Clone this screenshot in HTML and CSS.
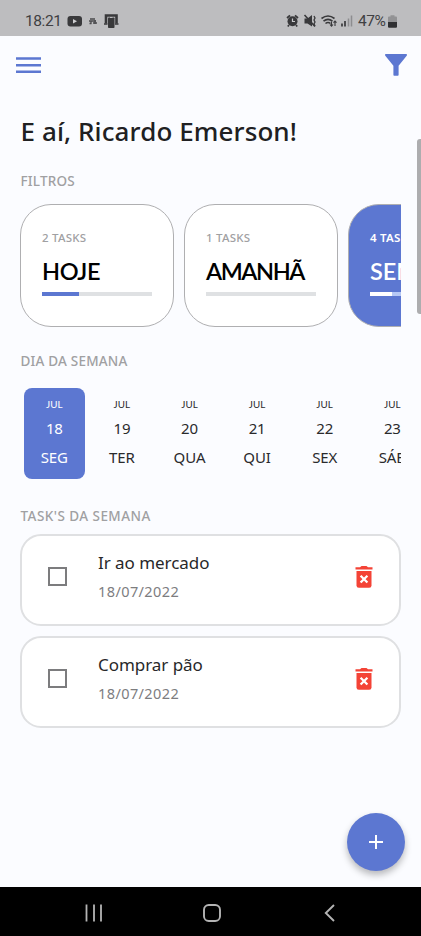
FILE: index.html
```html
<!DOCTYPE html>
<html lang="pt-BR">
<head>
<meta charset="utf-8">
<title>Tasks</title>
<link rel="stylesheet" href="styles.css">
</head>
<body>
<div class="app">
  <div class="status">
    <span class="clock">18:21</span>
    <svg class="notifications" width="54" height="16" viewBox="0 0 54 16">
      <rect x="0.5" y="3" width="14.5" height="10.5" rx="3" fill="#39393b"/>
      <path d="M6 6v4.5l4-2.2z" fill="#d0d0d2"/>
      <path d="M23 6h5M22 8h7M22.5 10.5h2M26 10h4M24 8v3M28 7v4" stroke="#4b4b4d" stroke-width="1.3" fill="none"/>
      <path d="M39 10.500V2.500h10.500v8" stroke="#39393b" stroke-width="2.600" fill="none"/>
      <path d="M37 11h3.500M48 11h3.500" stroke="#39393b" stroke-width="1.500"/>
      <rect x="41" y="4.500" width="6.500" height="10.500" rx="0.800" fill="#39393b"/>
      <path d="M43 4.500h2.500" stroke="#bdbdbf"/>
    </svg>
    <svg class="indicators" width="68" height="16" viewBox="0 0 68 16">
      <circle cx="6.500" cy="8.200" r="5" fill="#39393b"/>
      <path d="M1 5l3-2.700M9 2.300L12 5M3 12l-1.200 1.500M10 12l1.200 1.500" stroke="#39393b" stroke-width="1.700"/>
      <path d="M6.500 5.500v3h2.500" stroke="#c8c8ca" stroke-width="1.200" fill="none"/>
      <path d="M18.500 5.500h3L26 2v11.500L21.500 10.500h-3z" fill="#39393b"/>
      <path d="M18.500 2l10.500 11.500" stroke="#39393b" stroke-width="1.600"/>
      <path d="M28 3l1 2-1 2 1 2-1 2 1 2" stroke="#39393b" stroke-width="1.300" fill="none"/>
      <path d="M35.500 5.500Q42 .5 48.500 5.500M37.500 8.200Q42 4.500 46.500 8.200M39.500 10.500Q42 8.500 44.500 10.500" stroke="#39393b" stroke-width="1.600" fill="none"/>
      <path d="M45.500 8.500v4.700m-1.500-1.700l1.500 1.700 1.500-1.700M49 13V8m-1.500 1.700L49 8l1.500 1.700" stroke="#39393b" stroke-width="1.100" fill="none"/>
      <path d="M56 13.500v-3M59 13.500V8" stroke="#39393b" stroke-width="1.700"/>
      <path d="M62.500 13.500V5.500M65.500 13.500V2.500" stroke="#8d8d8f" stroke-width="1.500"/>
    </svg>
    <span class="charge">47%</span>
    <svg class="battery" width="9" height="13" viewBox="0 0 9 13">
      <path d="M2.500 1.500V.3h4v1.200H8q1 0 1 1V7H0V2.500q0-1 1-1z" fill="#929294"/>
      <path d="M0 7h9v4.500q0 1.200-1 1.200H1q-1 0-1-1.200z" fill="#303032"/>
    </svg>
  </div>

  <header class="topbar">
    <svg width="26" height="18" viewBox="0 0 26 18"><path d="M0 2.500h25M0 9.200h25M0 15.700h25" stroke="#5c77d1" stroke-width="2.600"/></svg>
    <svg width="22" height="22" viewBox="0 0 22 22"><path d="M.8 0h20.400q1.300.5.500 1.700L13.600 11.800V21q0 .8-.8.8H9.200q-.8 0-.8-.8v-9.200L.3 1.700Q-.5.500.8 0z" fill="#5c77d1"/></svg>
  </header>

  <main class="content">
    <h1 class="greeting">E aí, Ricardo Emerson!</h1>

    <h2 class="label label-filters">FILTROS</h2>
    <div class="filters">
      <div class="filter">
        <span class="count">2 TASKS</span>
        <span class="name name-today">HOJE</span>
        <div class="bar"><div class="fill"></div></div>
      </div>
      <div class="filter">
        <span class="count">1 TASKS</span>
        <span class="name name-tomorrow">AMANHÃ</span>
        <div class="bar"></div>
      </div>
      <div class="filter selected">
        <span class="count">4 TASKS</span>
        <span class="name">SEMANA</span>
        <div class="bar"><div class="fill week"></div></div>
      </div>
    </div>

    <h2 class="label label-days">DIA DA SEMANA</h2>
    <div class="days">
      <div class="day active"><span class="month">JUL</span><span class="num">18</span><span class="wd">SEG</span></div>
      <div class="day"><span class="month">JUL</span><span class="num">19</span><span class="wd">TER</span></div>
      <div class="day"><span class="month">JUL</span><span class="num">20</span><span class="wd">QUA</span></div>
      <div class="day"><span class="month">JUL</span><span class="num">21</span><span class="wd">QUI</span></div>
      <div class="day"><span class="month">JUL</span><span class="num">22</span><span class="wd">SEX</span></div>
      <div class="day"><span class="month">JUL</span><span class="num">23</span><span class="wd">SÁB</span></div>
    </div>

    <h2 class="label label-tasks">TASK'S DA SEMANA</h2>
    <div class="tasks">
      <div class="task">
        <span class="check"></span>
        <div class="info"><span class="title">Ir ao mercado</span><span class="date">18/07/2022</span></div>
        <svg class="trash" width="18" height="22" viewBox="0 0 18 22"><path d="M.5 1.200h4.500L6.500 0h5L13 1.200h4.500V3.500H.5z" fill="#f44336"/><path d="M1.500 5h15v14.500q0 2.300-2.300 2.300H3.800q-2.300 0-2.300-2.300z" fill="#f44336"/><path d="M5.600 9.700l6.800 6.800M12.400 9.700l-6.800 6.800" stroke="#fff" stroke-width="2.300"/></svg>
      </div>
      <div class="task">
        <span class="check"></span>
        <div class="info"><span class="title">Comprar pão</span><span class="date">18/07/2022</span></div>
        <svg class="trash" width="18" height="22" viewBox="0 0 18 22"><path d="M.5 1.200h4.500L6.500 0h5L13 1.200h4.500V3.500H.5z" fill="#f44336"/><path d="M1.500 5h15v14.500q0 2.300-2.300 2.300H3.800q-2.300 0-2.300-2.300z" fill="#f44336"/><path d="M5.600 9.700l6.800 6.800M12.400 9.700l-6.800 6.800" stroke="#fff" stroke-width="2.300"/></svg>
      </div>
    </div>
  </main>

  <nav class="navbar">
    <svg width="18" height="18" viewBox="0 0 18 18"><path d="M1.500.5v17M9 .5v17M16 .5v17" stroke="#b4b4b4" stroke-width="1.800"/></svg>
    <svg width="18" height="18" viewBox="0 0 18 18"><rect x="1" y="1" width="16" height="16" rx="4.800" fill="none" stroke="#b4b4b4" stroke-width="1.900"/></svg>
    <svg width="18" height="18" viewBox="0 0 18 18"><path d="M13 1L4.800 9l8.200 8" fill="none" stroke="#b4b4b4" stroke-width="1.900"/></svg>
  </nav>

  <div class="scrollbar"></div>
  <div class="fab"><svg width="14" height="14" viewBox="0 0 14 14"><path d="M0 7h14M7 0v14" stroke="#fff" stroke-width="2"/></svg></div>
</div>
</body>
</html>
```
FILE: styles.css
```css
* { box-sizing: border-box; margin: 0; padding: 0; }
body { font-family: "Noto Sans", sans-serif; background: #000; }
svg { display: block; flex: none; }
.app {
  position: relative;
  width: 421px;
  height: 936px;
  display: flex;
  flex-direction: column;
  overflow: hidden;
  background: #fbfcff;
}
.status {
  height: 36px;
  flex: none;
  display: flex;
  align-items: center;
  padding: 6px 24px 0 25px;
  background: #bdbdbf;
  color: #404042;
  font: 15.5px/20px Roboto, sans-serif;
}
.clock { width: 42px; letter-spacing: -0.4px; }
.indicators { margin-left: auto; }
.charge { width: 29px; margin: 0 1px 0 4px; letter-spacing: -0.4px; }
.topbar {
  height: 58px;
  flex: none;
  display: flex;
  align-items: center;
  justify-content: space-between;
  padding: 0 14px 0 16px;
}
.content { flex: 1; padding: 20px 20px 0; min-height: 0; }
.greeting {
  height: 36px;
  padding-left: 0.5px;
  font-size: 26px;
  line-height: 35px;
  font-weight: 500;
  letter-spacing: 0.1px;
  color: #202022;
  white-space: nowrap;
}
.label {
  height: 20px;
  padding-left: 0.5px;
  font-size: 13.5px;
  line-height: 20px;
  font-weight: 500;
  letter-spacing: 0.2px;
  color: #a0a0a2;
}
.label-filters { margin-top: 21px; }
.label-days { margin-top: 24px; }
.label-tasks { margin-top: 27px; letter-spacing: 0.45px; }
.filters { display: flex; gap: 10px; margin-top: 13px; overflow: hidden; }
.filter {
  flex: none;
  width: 154px;
  height: 123px;
  display: flex;
  flex-direction: column;
  padding: 24px 21px 0;
  border: 1px solid #afafb1;
  border-radius: 31px;
  background: #fff;
}
.count { font-size: 11.5px; line-height: 18px; font-weight: 500; letter-spacing: 0.25px; color: #a0a0a2; }
.name { margin-top: 9px; font-family: Lato, sans-serif; font-size: 23.500px; line-height: 30px; font-weight: 600; color: #000; }
.name-today { letter-spacing: -0.4px; }
.name-tomorrow { letter-spacing: -1.4px; }
.bar { height: 4px; margin-top: 6px; background: #dfe1e3; }
.fill { width: 37px; height: 4px; background: #5c77d1; }
.selected { background: #5c77d1; }
.selected .count, .selected .name { color: #fff; }
.selected .count { font-weight: 600; }
.selected .bar { background: #b6c8f5; }
.selected .week { width: 22px; background: #fff; }
.days { display: flex; gap: 6px; margin-top: 17px; padding-left: 3.5px; overflow: hidden; }
.day {
  flex: none;
  width: 61.600px;
  height: 91px;
  display: flex;
  flex-direction: column;
  align-items: center;
  padding-top: 8px;
  border-radius: 8px;
  color: #2a2a2c;
}
.active { background: #5c77d1; color: #fff; }
.month { font-family: Lato, sans-serif; font-size: 9.8px; line-height: 16px; letter-spacing: 0.1px; }
.num { margin-top: 6px; font-size: 15px; line-height: 20px; letter-spacing: -0.2px; }
.wd { margin-top: 9px; font-size: 15px; line-height: 20px; letter-spacing: -0.1px; }
.tasks { display: flex; flex-direction: column; gap: 10px; margin-top: 8px; }
.task {
  height: 92px;
  display: flex;
  align-items: center;
  padding: 0 26px 7px 26px;
  border: 2px solid #dfe0e2;
  border-radius: 21px;
  background: #fff;
}
.check { width: 19px; height: 19px; border: 2px solid #7c7c7e; }
.info { display: flex; flex-direction: column; margin-left: 31px; }
.title { font-size: 17px; line-height: 28px; letter-spacing: -0.05px; color: #28282a; }
.date { font-size: 14.500px; line-height: 28px; letter-spacing: 0.4px; color: #7d7d7f; }
.trash { margin-left: auto; }
.navbar {
  height: 49px;
  flex: none;
  display: flex;
  justify-content: space-between;
  align-items: center;
  padding: 3px 82px 0 85px;
  background: #000;
}
.scrollbar {
  position: absolute;
  right: 0;
  top: 139px;
  width: 4px;
  height: 175px;
  border-radius: 3px 0 0 3px;
  background: #adadaf;
}
.fab {
  position: absolute;
  left: 347px;
  top: 813px;
  width: 58px;
  height: 58px;
  display: flex;
  align-items: center;
  justify-content: center;
  border-radius: 50%;
  background: #5c77d1;
  box-shadow: 0 4px 7px rgba(0, 0, 0, 0.27);
}
```
